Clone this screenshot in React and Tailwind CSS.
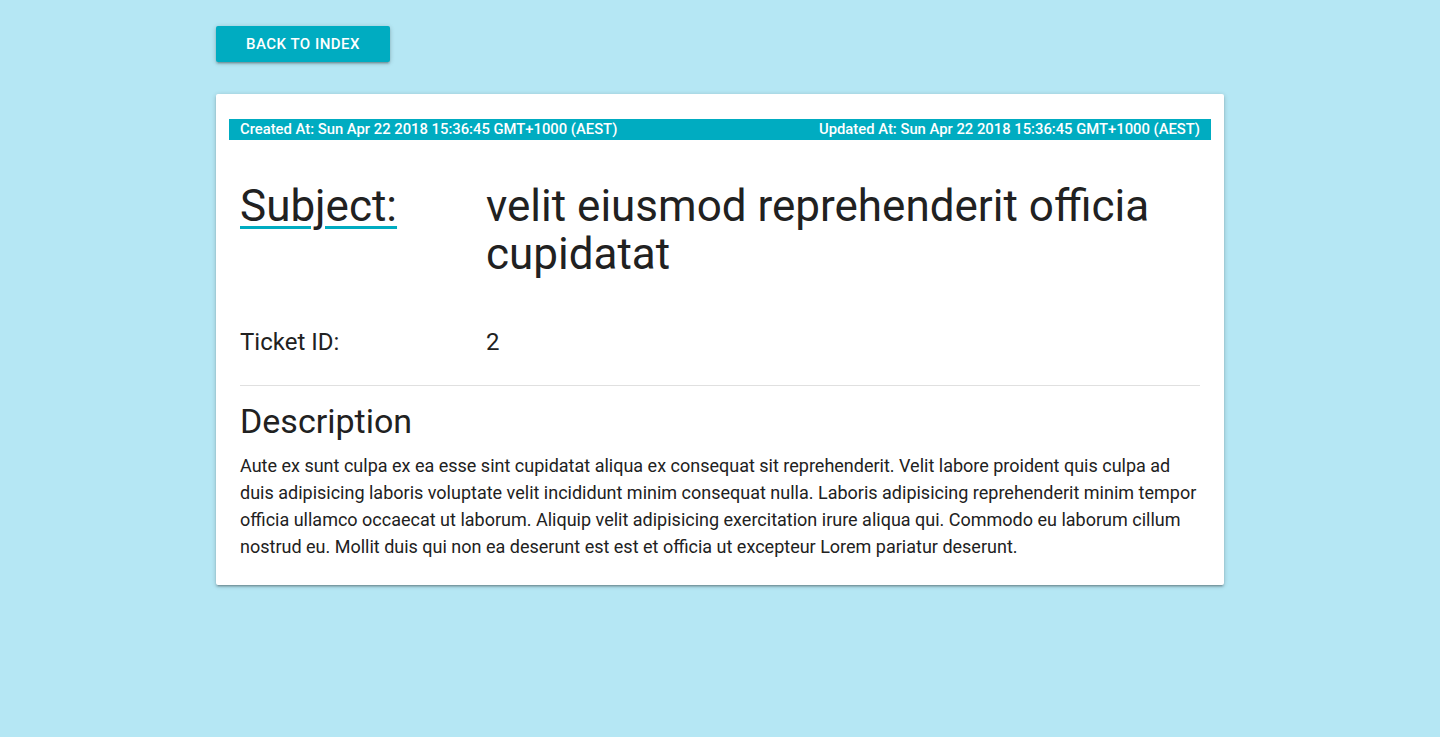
import React from "react";

const ticket = {
  id: 2,
  subject: "velit eiusmod reprehenderit officia cupidatat",
  createdAt: "Sun Apr 22 2018 15:36:45 GMT+1000 (AEST)",
  updatedAt: "Sun Apr 22 2018 15:36:45 GMT+1000 (AEST)",
  description:
    "Aute ex sunt culpa ex ea esse sint cupidatat aliqua ex consequat sit reprehenderit. Velit labore proident quis culpa ad duis adipisicing laboris voluptate velit incididunt minim consequat nulla. Laboris adipisicing reprehenderit minim tempor officia ullamco occaecat ut laborum. Aliquip velit adipisicing exercitation irure aliqua qui. Commodo eu laborum cillum nostrud eu. Mollit duis qui non ea deserunt est est et officia ut excepteur Lorem pariatur deserunt.",
};

export default function App() {
  return (
    <div
      className="min-h-screen bg-[#b5e7f4] text-[#212121]"
      style={{ fontFamily: "Roboto, 'Liberation Sans', sans-serif" }}
    >
      <div className="w-[1008px] ml-[216px] pt-[26px]">
        <button className="h-[36px] w-[174px] rounded-[2px] bg-[#00acc1] text-white text-[15px] font-medium tracking-[0.5px] uppercase shadow-[0_2px_2px_0_rgba(0,0,0,0.14),0_3px_1px_-2px_rgba(0,0,0,0.12),0_1px_5px_0_rgba(0,0,0,0.2)]">
          Back to index
        </button>

        {/* Ticket card */}
        <div className="mt-[32px] bg-white rounded-[2px] px-[13px] pt-[25px] pb-[25px] shadow-[0_2px_2px_0_rgba(0,0,0,0.14),0_3px_1px_-2px_rgba(0,0,0,0.12),0_1px_5px_0_rgba(0,0,0,0.2)]">
          <div className="h-[21px] bg-[#00acc1] flex items-center justify-between px-[11px] text-white text-[14.8px] font-medium leading-[21px]">
            <span>Created At: {ticket.createdAt}</span>
            <span>Updated At: {ticket.updatedAt}</span>
          </div>

          <div className="px-[11px]">
            <div className="flex mt-[42px]">
              <div className="w-[246px] shrink-0 text-[44px] leading-[48px]">
                <span className="underline decoration-[#00acc1] decoration-[3px] underline-offset-[5px]">
                  Subject:
                </span>
              </div>
              <div className="text-[44px] leading-[48px]">{ticket.subject}</div>
            </div>

            <div className="flex mt-[48px] text-[24px] leading-[32px]">
              <div className="w-[246px] shrink-0">Ticket ID:</div>
              <div>{ticket.id}</div>
            </div>

            <hr className="mt-[27px] border-t border-[#e0e0e0]" />

            <h2 className="mt-[15px] text-[34px] leading-[40px]">Description</h2>
            <p className="mt-[11px] text-[18px] leading-[27px]">{ticket.description}</p>
          </div>
        </div>
      </div>
    </div>
  );
}
